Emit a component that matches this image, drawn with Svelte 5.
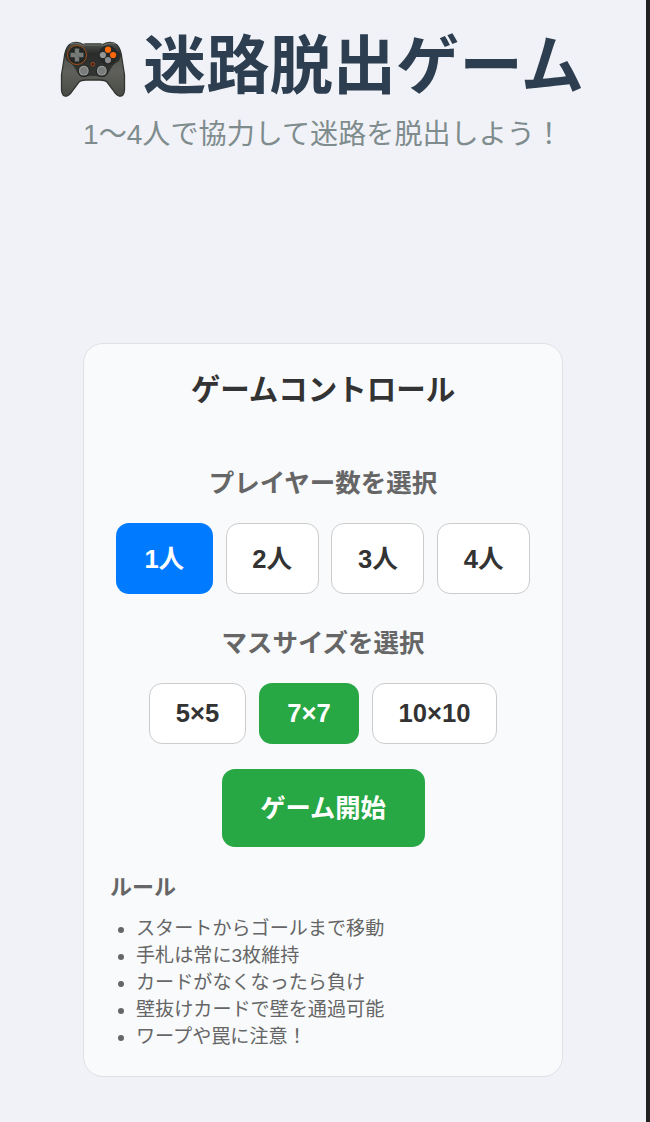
<script>
  const playerOptions = [1, 2, 3, 4];
  const sizeOptions = [5, 7, 10];
  const rules = [
    'スタートからゴールまで移動',
    '手札は常に3枚維持',
    'カードがなくなったら負け',
    '壁抜けカードで壁を通過可能',
    'ワープや罠に注意！'
  ];
  let players = $state(1);
  let size = $state(7);
</script>

<div class="frame">
  <main>
    <header>
      <h1>
        <svg class="pad" viewBox="0 0 66 58" aria-hidden="true">
          <defs>
            <linearGradient id="body" x1="0" y1="0" x2="0" y2="1">
              <stop offset="0" stop-color="#4b4e49" />
              <stop offset=".55" stop-color="#5f605b" />
              <stop offset="1" stop-color="#484a44" />
            </linearGradient>
            <linearGradient id="face" x1="0" y1="0" x2="0" y2="1">
              <stop offset="0" stop-color="#50544f" />
              <stop offset=".3" stop-color="#292c2a" />
              <stop offset="1" stop-color="#343633" />
            </linearGradient>
            <radialGradient id="stick">
              <stop offset="0" stop-color="#7b7e7c" />
              <stop offset=".65" stop-color="#777b7a" />
              <stop offset="1" stop-color="#a5a8a7" />
            </radialGradient>
          </defs>
          <path d="M9 4Q13 0 20 2Q22 4 25 3H41Q44 4 46 2Q53 0 57 4Q61 8 62 18L64.5 34V49Q64 56 59 55Q56 54 53 49L47 41Q45 39 40 39H26Q21 39 19 41L13 49Q10 54 7 55Q2 56 1.5 49V34L4 18Q5 8 9 4Z" fill="url(#body)" stroke="#30332e" stroke-width="1.3" />
          <path d="M8 6Q13 1 20 3Q22 5 25 4H41Q44 5 46 3Q53 1 58 6Q63 14 59 20Q53 23 50 29Q47 37 41 36Q38 35 33 35Q28 35 25 36Q19 37 16 29Q13 23 7 20Q3 14 8 6Z" fill="url(#face)" />
          <path d="M10 3Q14 1 20 3Q22 5 25 4H41Q44 5 46 3Q52 1 56 3" fill="none" stroke="#737771" />
          <circle cx="17" cy="14" r="9.5" fill="#222725" stroke="#a64f1c" stroke-width="1" />
          <path d="M14.8 7.5h4.4v4.5l-2.2 2-2.2-2zM14.8 20.5h4.4v-4.5l-2.2-2-2.2 2zM10.5 11.8v4.4h4.5l2-2.2-2-2.2zM23.5 11.8v4.4h-4.5l-2-2.2 2-2.2z" fill="#777a76" />
          <circle cx="48" cy="14" r="9.5" fill="#252827" />
          <circle cx="48" cy="8.7" r="3.1" fill="#ff6a0b" />
          <circle cx="53.1" cy="14" r="3.1" fill="#ff650b" />
          <circle cx="42.9" cy="14" r="3.1" fill="#949596" />
          <circle cx="48" cy="19.1" r="3.1" fill="#898b8c" />
          <circle cx="32.8" cy="23.2" r="1.8" fill="#342119" stroke="#c65218" stroke-width=".8" />
          <circle cx="23.8" cy="30" r="6" fill="#222623" />
          <circle cx="41.8" cy="30" r="6" fill="#222623" />
          <circle cx="23.8" cy="29.7" r="4.9" fill="url(#stick)" />
          <circle cx="41.8" cy="29.7" r="4.9" fill="url(#stick)" />
        </svg>
        <span>迷路脱出ゲーム</span>
      </h1>
      <p class="lead">1〜4人で協力して迷路を脱出しよう！</p>
    </header>

    <section class="panel">
      <h2>ゲームコントロール</h2>
      <h3>プレイヤー数を選択</h3>
      <div class="options players">
        {#each playerOptions as n}
          <button class:active={players === n} onclick={() => (players = n)}>{n}人</button>
        {/each}
      </div>
      <h3>マスサイズを選択</h3>
      <div class="options sizes">
        {#each sizeOptions as n}
          <button class:active={size === n} onclick={() => (size = n)}>{n}×{n}</button>
        {/each}
      </div>
      <button class="start">ゲーム開始</button>
      <div class="rules">
        <h4>ルール</h4>
        <ul>
          {#each rules as rule}
            <li>{rule}</li>
          {/each}
        </ul>
      </div>
    </section>
  </main>
</div>

<style>
  :global(body) { margin: 0; }
  .frame {
    box-sizing: border-box;
    height: 1122px;
    overflow: hidden;
    background: #f0f2f7;
    border-right: 4px solid #222;
    font-family: "Liberation Sans", "Noto Sans CJK JP", sans-serif;
  }
  main, header { display: flex; flex-direction: column; align-items: center; }
  header { height: 343px; }
  h1, h2, h3, h4, p, ul { margin: 0; }
  h1 {
    display: flex;
    gap: 17px;
    height: 110px;
    padding: 20px 2px 0 0;
    box-sizing: border-box;
    color: #2c3e50;
    font-size: 63.3px;
    line-height: 92px;
    white-space: nowrap;
  }
  .pad { width: 66px; height: 58px; margin-top: 21px; }
  .lead { color: #7f8c8d; font-size: 28.1px; line-height: 50px; white-space: nowrap; }
  .panel {
    box-sizing: border-box;
    width: 480px;
    height: 734px;
    padding: 26px 26px 0;
    display: flex;
    flex-direction: column;
    align-items: center;
    border: 1px solid #dfe1e6;
    border-radius: 20px;
    background: #f8fafc;
  }
  h2 { margin-bottom: 53px; color: #333; font-size: 29.5px; line-height: 40px; }
  h3 { margin-bottom: 20px; color: #666; font-size: 25.5px; line-height: 40px; }
  .options { display: flex; gap: 13px; }
  button {
    box-sizing: border-box;
    padding: 0;
    border: 1px solid #ccc;
    border-radius: 13px;
    background: #fff;
    color: #333;
    font: bold 25.6px/40px "Liberation Sans", "Noto Sans CJK JP", sans-serif;
  }
  .players { gap: 12.8px; margin-bottom: 29px; }
  .players button { width: 93px; height: 71px; }
  .players .active { width: 97px; border: 0; background: #007bff; color: #fff; }
  .sizes { margin-bottom: 25px; }
  .sizes button { width: 97px; height: 61px; padding-bottom: 1px; }
  .sizes button:last-child { width: 125px; }
  .sizes .active { width: 100px; border: 0; background: #28a745; color: #fff; }
  .start { width: 203px; height: 78px; flex: none; border: 0; background: #28a745; color: #fff; font-size: 25.3px; }
  .rules { width: 100%; margin-top: 23px; color: #666; }
  h4 { font-size: 22px; line-height: 36px; margin-bottom: 9px; }
  ul { padding-left: 26px; font-size: 19.1px; line-height: 27px; }
  li { height: 27px; }
</style>
